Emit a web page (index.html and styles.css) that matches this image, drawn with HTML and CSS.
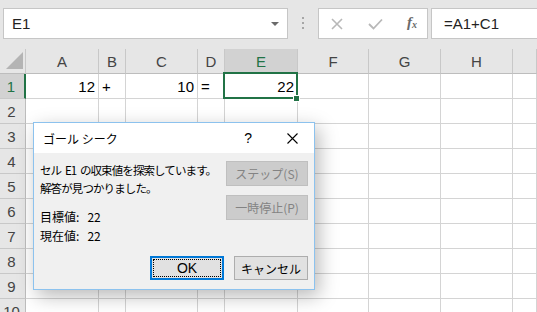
FILE: index.html
```html
<!DOCTYPE html>
<html lang="ja">
<head>
  <meta charset="UTF-8">
  <title>ゴール シーク</title>
  <link rel="stylesheet" href="styles.css">
</head>
<body>
  <div class="toolbar">
    <div class="name-box">
      <span>E1</span>
      <span class="caret"></span>
    </div>
    <div class="grip"><i></i><i></i><i></i></div>
    <div class="fx-box">
      <svg width="14" height="14" viewBox="0 0 14 14"><path d="M2 2 L12 12 M12 2 L2 12" stroke="#b8b8b8" stroke-width="1.6" fill="none"/></svg>
      <svg width="15" height="12" viewBox="0 0 15 12"><path d="M1 6 L5.5 10.5 L14 1.5" stroke="#b8b8b8" stroke-width="1.8" fill="none"/></svg>
      <span class="fx">f<sub>x</sub></span>
    </div>
    <div class="formula">=A1+C1</div>
  </div>

  <div class="sheet">
    <div class="hd corner"><span class="tri"></span></div>
    <div class="hd">A</div>
    <div class="hd">B</div>
    <div class="hd">C</div>
    <div class="hd">D</div>
    <div class="hd active">E</div>
    <div class="hd">F</div>
    <div class="hd">G</div>
    <div class="hd">H</div>
    <div class="hd"></div>

    <div class="rh active">1</div>
    <div class="c num">12</div>
    <div class="c">+</div>
    <div class="c num">10</div>
    <div class="c">=</div>
    <div class="c num">22</div>
    <div class="c"></div><div class="c"></div><div class="c"></div><div class="c"></div>

    <div class="rh">2</div><div class="c"></div><div class="c"></div><div class="c"></div><div class="c"></div><div class="c"></div><div class="c"></div><div class="c"></div><div class="c"></div><div class="c"></div>
    <div class="rh">3</div><div class="c"></div><div class="c"></div><div class="c"></div><div class="c"></div><div class="c"></div><div class="c"></div><div class="c"></div><div class="c"></div><div class="c"></div>
    <div class="rh">4</div><div class="c"></div><div class="c"></div><div class="c"></div><div class="c"></div><div class="c"></div><div class="c"></div><div class="c"></div><div class="c"></div><div class="c"></div>
    <div class="rh">5</div><div class="c"></div><div class="c"></div><div class="c"></div><div class="c"></div><div class="c"></div><div class="c"></div><div class="c"></div><div class="c"></div><div class="c"></div>
    <div class="rh">6</div><div class="c"></div><div class="c"></div><div class="c"></div><div class="c"></div><div class="c"></div><div class="c"></div><div class="c"></div><div class="c"></div><div class="c"></div>
    <div class="rh">7</div><div class="c"></div><div class="c"></div><div class="c"></div><div class="c"></div><div class="c"></div><div class="c"></div><div class="c"></div><div class="c"></div><div class="c"></div>
    <div class="rh">8</div><div class="c"></div><div class="c"></div><div class="c"></div><div class="c"></div><div class="c"></div><div class="c"></div><div class="c"></div><div class="c"></div><div class="c"></div>
    <div class="rh">9</div><div class="c"></div><div class="c"></div><div class="c"></div><div class="c"></div><div class="c"></div><div class="c"></div><div class="c"></div><div class="c"></div><div class="c"></div>
    <div class="rh">10</div><div class="c"></div><div class="c"></div><div class="c"></div><div class="c"></div><div class="c"></div><div class="c"></div><div class="c"></div><div class="c"></div><div class="c"></div>

    <!-- selected cell E1 -->
    <div class="selection"><span class="handle"></span></div>
  </div>

  <div class="dialog">
    <div class="title-bar">
      <span class="title">ゴール シーク</span>
      <span class="help">?</span>
      <svg class="close" width="11" height="11" viewBox="0 0 11 11"><path d="M0.5 0.5 L10.5 10.5 M10.5 0.5 L0.5 10.5" stroke="#000" stroke-width="1.1" fill="none"/></svg>
    </div>
    <div class="dialog-body">
      <div class="top">
        <div class="msg">
          <p>セル E1 の収束値を探索しています。<br>解答が見つかりました。</p>
          <p class="values">目標値:&nbsp;&nbsp; 22<br>現在値:&nbsp;&nbsp; 22</p>
        </div>
        <div class="side">
          <button class="btn" disabled>ステップ(S)</button>
          <button class="btn" disabled>一時停止(P)</button>
        </div>
      </div>
      <div class="actions">
        <button class="btn primary"><span>OK</span></button>
        <button class="btn">キャンセル</button>
      </div>
    </div>
  </div>
</body>
</html>
```

FILE: styles.css
```css
body {
  margin: 0;
  width: 537px;
  height: 312px;
  overflow: hidden;
  background: #fff;
  font-family: 'Liberation Sans', Arial, sans-serif;
  color: #000;
  position: relative;
}

/* formula bar */
.toolbar {
  height: 49px;
  background: #e6e6e6;
  display: flex;
  align-items: flex-start;
  padding-top: 8px;
  box-sizing: border-box;
}

.name-box,
.fx-box,
.formula {
  height: 31px;
  box-sizing: border-box;
  background: #fff;
  border: 1px solid #c6c6c6;
  display: flex;
  align-items: center;
}

.name-box {
  margin-left: 3px;
  width: 285px;
  padding: 0 8px 0 8px;
  justify-content: space-between;
  font-size: 15px;
  color: #222;
}

.caret {
  width: 0;
  height: 0;
  border-left: 4px solid transparent;
  border-right: 4px solid transparent;
  border-top: 4px solid #6a6a6a;
  margin-top: 1px;
}

.grip {
  width: 30px;
  display: flex;
  flex-direction: column;
  align-items: center;
  gap: 3px;
  padding-top: 9px;
}

.grip i {
  width: 2px;
  height: 2px;
  background: #a6a6a6;
}

.fx-box {
  width: 110px;
  padding: 0 10px 0 11px;
  justify-content: space-between;
}

.fx {
  font-family: 'Liberation Serif', 'Times New Roman', serif;
  font-style: italic;
  font-weight: bold;
  font-size: 15px;
  color: #6a6a6a;
  margin-top: -3px;
}

.fx sub {
  font-size: 10px;
  vertical-align: -1px;
}

.formula {
  margin-left: 3px;
  flex: 1;
  border-right: none;
  padding-left: 12px;
  font-size: 15px;
  color: #222;
}

/* sheet grid */
.sheet {
  position: relative;
  display: grid;
  grid-template-columns: 26px 73px 27px 72px 27px 73px 71px 72px 72px 1fr;
  grid-auto-rows: 25px;
}

.hd,
.rh,
.c {
  box-sizing: border-box;
  border-right: 1px solid #d4d4d4;
  border-bottom: 1px solid #d4d4d4;
}

.hd {
  background: #e6e6e6;
  border-right-color: #c8c8c8;
  border-bottom-color: #bdbdbd;
  color: #444;
  font-size: 15px;
  display: flex;
  align-items: center;
  justify-content: center;
}

.hd.active {
  background: #d2d2d2;
  color: #217346;
}

.corner {
  position: relative;
}

.tri {
  position: absolute;
  right: 2px;
  bottom: 4px;
  width: 0;
  height: 0;
  border-left: 17px solid transparent;
  border-bottom: 17px solid #b4b4b4;
}

.rh {
  background: #e6e6e6;
  border-right-color: #bdbdbd;
  border-bottom-color: #c8c8c8;
  color: #444;
  font-size: 15px;
  display: flex;
  align-items: center;
  justify-content: center;
  padding-right: 2px;
}

.rh.active {
  background: #d2d2d2;
  color: #217346;
  border-right: 2px solid #217346;
}

.c {
  font-size: 15px;
  display: flex;
  align-items: center;
  padding: 0 3px;
}

.c.num {
  justify-content: flex-end;
}

.selection {
  position: absolute;
  left: 223px;
  top: 23px;
  width: 75px;
  height: 27px;
  box-sizing: border-box;
  border: 2px solid #217346;
}

.handle {
  position: absolute;
  right: -4px;
  bottom: -5px;
  width: 5px;
  height: 5px;
  background: #217346;
  border: 1px solid #fff;
}

/* goal seek dialog */
.dialog {
  position: absolute;
  left: 33px;
  top: 122px;
  width: 282px;
  height: 168px;
  box-sizing: border-box;
  border: 1px solid #8cc2ee;
  background: #f0f0f0;
  box-shadow: 4px 6px 18px rgba(0, 0, 0, 0.28);
  font-family: 'Noto Sans CJK JP', 'Liberation Sans', sans-serif;
  font-size: 12px;
  display: flex;
  flex-direction: column;
}

.title-bar {
  height: 30px;
  background: #fff;
  display: flex;
  align-items: center;
  padding: 0 16px 0 9px;
}

.title {
  flex: 1;
}

.help {
  font-family: 'Liberation Sans', sans-serif;
  font-size: 14px;
  margin-right: 35px;
}

.dialog-body {
  flex: 1;
  display: flex;
  flex-direction: column;
  padding: 8px 6px 9px 6px;
}

.top {
  display: flex;
  justify-content: space-between;
}

.msg {
  flex: none;
  white-space: nowrap;
}

.msg p {
  margin: 0;
  line-height: 18px;
  font-size: 11.5px;
  letter-spacing: -0.9px;
  word-spacing: 2px;
}

.msg p.values {
  margin-top: 10px;
  line-height: 19px;
  font-size: 12px;
  letter-spacing: 0;
  word-spacing: 0;
}

.side {
  display: flex;
  flex-direction: column;
  gap: 9px;
}

.btn {
  width: 82px;
  height: 25px;
  box-sizing: border-box;
  border: 1px solid #adadad;
  background: #e1e1e1;
  font-family: 'Noto Sans CJK JP', 'Liberation Sans', sans-serif;
  font-size: 12px;
  color: #000;
  padding: 0;
}

.btn:disabled {
  background: #cccccc;
  border-color: #bfbfbf;
  color: #838383;
}

.actions {
  margin-top: auto;
  display: flex;
  justify-content: flex-end;
  gap: 10px;
}

.actions .btn {
  width: 74px;
  height: 24px;
}

.btn.primary {
  border: 2px solid #0078d7;
  padding: 1px;
}

.btn.primary span {
  display: flex;
  align-items: center;
  justify-content: center;
  height: 100%;
  border: 1px dotted #000;
  box-sizing: border-box;
  font-family: 'Liberation Sans', sans-serif;
  font-size: 14px;
}
```
